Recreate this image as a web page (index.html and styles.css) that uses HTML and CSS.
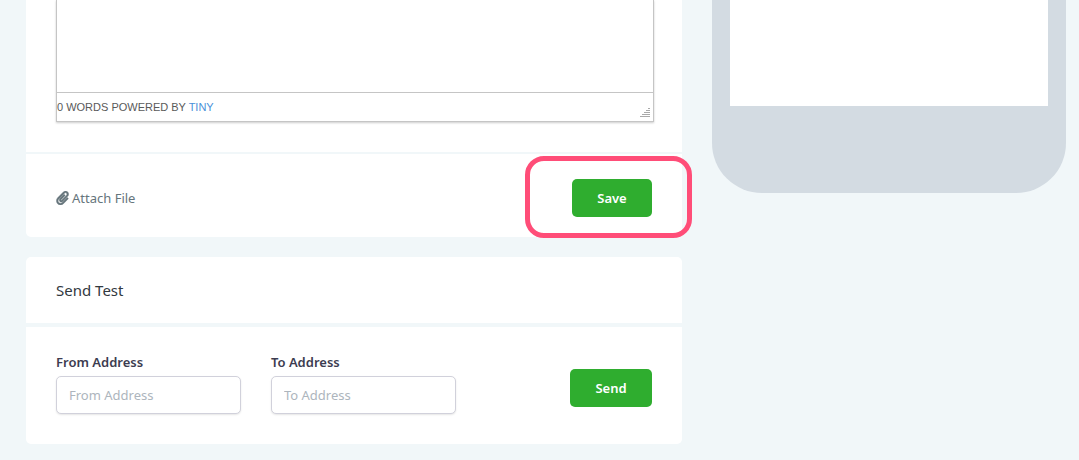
FILE: index.html
```html
<!DOCTYPE html>
<html lang="en">

<head>
  <meta charset="UTF-8">
  <meta name="viewport" content="width=device-width, initial-scale=1.0">
  <title>Email Template</title>
  <link rel="stylesheet" href="styles.css">
</head>

<body>
  <main class="page">
    <div class="forms">
      <section class="card card-editor">
        <div class="editor-body">
          <div class="editor">
            <textarea class="editor-text" aria-label="Message"></textarea>
            <div class="statusbar">
              <span>0 WORDS POWERED BY <a href="#">TINY</a></span>
              <svg class="resize" width="10" height="10" viewBox="0 0 10 10" aria-hidden="true">
                <path d="M8 .5h2M6 2.5h4M4 4.5h6M2 6.5h8M0 8.5h10" stroke="#a9a9a9" fill="none" />
              </svg>
            </div>
          </div>
        </div>
        <div class="card-footer">
          <a class="attach" href="#">
            <svg width="13" height="14" viewBox="0 0 448 512" aria-hidden="true">
              <path fill="currentColor" stroke="currentColor" stroke-width="14" d="M43.246 466.142c-58.43-60.289-57.341-157.511 1.386-217.581L254.392 34c44.316-45.332 116.351-45.336 160.671 0 43.89 44.894 43.943 117.329 0 162.276L232.214 383.128c-29.855 30.537-78.633 30.111-107.982-.998-28.275-29.97-27.368-77.473 1.452-106.953l143.743-146.835c6.182-6.314 16.312-6.422 22.626-.241l22.861 22.379c6.315 6.182 6.422 16.312.241 22.626L171.427 319.927c-4.932 5.045-5.236 13.428-.648 18.292 4.372 4.634 11.245 4.711 15.688.165l182.849-186.851c19.613-20.062 19.613-52.725-.011-72.798-19.189-19.627-49.957-19.637-69.154 0L90.39 293.295c-34.763 35.56-35.299 93.12-1.191 128.313 34.01 35.093 88.985 35.137 123.058.286l172.06-175.999c6.177-6.319 16.307-6.433 22.626-.256l22.877 22.364c6.319 6.177 6.434 16.307.256 22.626l-172.06 175.998c-59.576 60.938-155.943 60.216-214.77-.485z" />
            </svg>
            <span>Attach File</span>
          </a>
          <div class="highlight">
            <button type="button" class="btn btn-save">Save</button>
          </div>
        </div>
      </section>

      <section class="card">
        <h2 class="card-header">Send Test</h2>
        <form class="test-form">
          <div class="field">
            <label for="from">From Address</label>
            <input type="text" id="from" placeholder="From Address">
          </div>
          <div class="field">
            <label for="to">To Address</label>
            <input type="text" id="to" placeholder="To Address">
          </div>
          <button type="button" class="btn btn-send">Send</button>
        </form>
      </section>
    </div>

    <aside class="phone">
      <div class="phone-screen"></div>
    </aside>
  </main>
</body>

</html>
```

FILE: styles.css
```css
* {
  box-sizing: border-box;
}

body {
  margin: 0;
  background-color: #f1f7f9;
  font-family: "Noto Sans", "Open Sans", sans-serif;
  font-size: 13px;
  line-height: 20px;
  color: #32393f;
}

.page {
  display: grid;
  grid-template-columns: 656fr 354fr;
  align-items: start;
  gap: 30px;
  padding: 0 13px 16px 26px;
}

.card {
  background: #fff;
  border-radius: 5px;
  margin-bottom: 20px;
}

.forms .card:last-child {
  margin-bottom: 0;
}

.card-editor {
  border-radius: 0 0 5px 5px;
}

/* editor */
.editor-body {
  padding: 0 28px 30px 30px;
}

.editor {
  border: 1px solid #c5c5c5;
  border-top: 0;
  box-shadow: 0 1px 2px rgba(0, 0, 0, 0.2);
}

.editor-text {
  display: block;
  width: 100%;
  height: 92px;
  border: 0;
  padding: 8px;
  resize: none;
  outline: none;
}

.statusbar {
  display: flex;
  justify-content: space-between;
  align-items: flex-end;
  border-top: 1px solid #c5c5c5;
  padding: 4px 3px 4px 0;
  font-family: "Liberation Sans", Arial, sans-serif;
  font-size: 11px;
  color: #595959;
}

.resize {
  margin-bottom: -1px;
}

.statusbar a {
  color: #4a90d9;
  text-decoration: none;
}

.card-footer {
  display: flex;
  justify-content: space-between;
  align-items: center;
  border-top: 2px solid #f1f7f9;
  padding: 25px 30px 20px;
}

.attach {
  display: flex;
  align-items: center;
  gap: 3px;
  color: #66757c;
  text-decoration: none;
}

.btn {
  height: 38px;
  padding: 0 25px;
  border: 0;
  border-radius: 5px;
  background-color: #2fad2f;
  color: #fff;
  font-family: inherit;
  font-size: 13px;
  font-weight: 600;
  cursor: pointer;
}

.btn:hover {
  background-color: #289628;
}

.btn-save {
  min-width: 80px;
}

.btn-send {
  min-width: 82px;
  justify-self: end;
  margin-bottom: 7px;
}

/* ring around the save button */
.highlight {
  position: relative;
  display: flex;
}

.highlight::after {
  content: "";
  position: absolute;
  inset: -23px -40px -21px -47px;
  border: 5px solid #ff4d78;
  border-radius: 19px;
  pointer-events: none;
}

/* send test */
.card-header {
  margin: 0;
  padding: 23px 30px;
  border-bottom: 4px solid #f1f7f9;
  font-size: 15px;
  font-weight: 400;
}

.test-form {
  display: grid;
  grid-template-columns: 1fr 1fr 166px;
  gap: 30px;
  align-items: end;
  padding: 25px 30px 30px;
}

.field label {
  display: block;
  margin-bottom: 4px;
  font-weight: 600;
  color: #3c3c50;
}

.field input {
  display: block;
  width: 100%;
  height: 38px;
  padding: 0 12px;
  border: 1px solid #d1d1db;
  border-radius: 5px;
  box-shadow: 0 1px 2px rgba(0, 0, 0, 0.1);
  font-family: inherit;
  font-size: 13px;
  color: #32393f;
}

.field input::placeholder {
  color: #adb5bd;
}

/* phone preview */
.phone {
  padding: 0 18px 87px;
  border-radius: 0 0 50px 50px;
  background-color: #d3dbe2;
}

.phone-screen {
  height: 106px;
  background: #fff;
}
```
